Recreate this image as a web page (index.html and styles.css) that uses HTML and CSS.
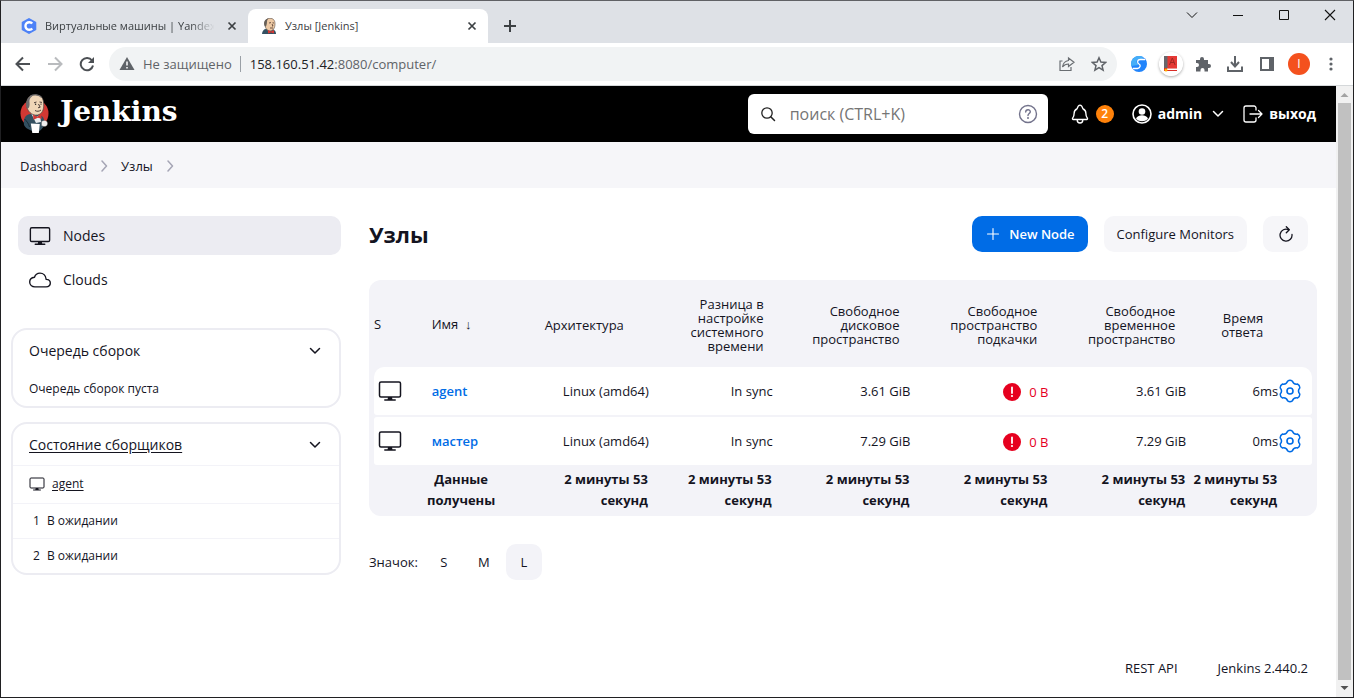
FILE: index.html
```html
<!DOCTYPE html>
<html lang="ru">
<head>
<meta charset="utf-8">
<title>Узлы [Jenkins]</title>
<link rel="stylesheet" href="styles.css">
</head>
<body>
<svg class="defs" aria-hidden="true">
  <symbol id="desktop" viewBox="0 0 24 24"><rect x="1.5" y="3" width="21" height="15" rx="1.5" fill="none" stroke="currentColor" stroke-width="1.5"/><path d="M10 18h4l.5 3h-5z" fill="currentColor"/><path d="M6.8 21h10.4" stroke="currentColor" stroke-width="1.5" stroke-linecap="round"/></symbol>
  <symbol id="cloud" viewBox="0 0 512 512"><path d="M400 240c-8.890-89.540-71-144-144-144-69 0-113.440 48.200-128 96-60 6-112 43.590-112 112 0 66 54 112 120 112h260c55 0 100-27.440 100-88 0-59.820-53-85.760-96-88z" fill="none" stroke="currentColor" stroke-width="32" stroke-linejoin="round"/></symbol>
  <symbol id="chevron" viewBox="0 0 12 12"><path d="M1.500 3.500 6 8l4.500-4.500" fill="none" stroke="currentColor" stroke-width="1.500" stroke-linecap="round" stroke-linejoin="round"/></symbol>
  <symbol id="crumb" viewBox="0 0 12 12"><path d="M4 1l4.500 5L4 11" fill="none" stroke="currentColor" stroke-width="1.500" stroke-linecap="round" stroke-linejoin="round"/></symbol>
  <symbol id="cross" viewBox="0 0 12 12"><path d="M2.500 2.500l7 7M9.500 2.500l-7 7" stroke="currentColor" stroke-width="1.700"/></symbol>
  <symbol id="gear" viewBox="0 0 24 24"><path d="M9.700 2.060A4 4 0 0 1 14.300 2.060Q15.600 5.770 19.460 5.040A4 4 0 0 1 21.750 9.020Q19.200 12 21.750 14.980A4 4 0 0 1 19.460 18.960Q15.600 18.230 14.300 21.940A4 4 0 0 1 9.700 21.940Q8.400 18.230 4.540 18.960A4 4 0 0 1 2.250 14.980Q4.800 12 2.250 9.020A4 4 0 0 1 4.540 5.040Q8.400 5.770 9.700 2.060z" fill="none" stroke="currentColor" stroke-width="1.500" stroke-linejoin="round"/><circle cx="12" cy="12" r="3" fill="none" stroke="currentColor" stroke-width="1.600"/></symbol>
  <symbol id="alert" viewBox="0 0 18 18"><circle cx="9" cy="9" r="9" fill="#e6001f"/><path d="M9 4.500v5.500" stroke="#fff" stroke-width="1.800" stroke-linecap="round"/><circle cx="9" cy="13" r="1.100" fill="#fff"/></symbol>
  <symbol id="butler" viewBox="0 0 30 40">
    <ellipse cx="14.500" cy="19.500" rx="14" ry="14" fill="#d33833"/>
    <path d="M4 31c-1-6 1-10 6-11l9 1c5 1 6 5 5 11-2 3-4 5-6 6-3 0-6-1-8-2-3-1-5-3-6-5z" fill="#335061"/>
    <path d="M11 19l5 4 4-2 1 7-5 1z" fill="#e9edf0"/>
    <path d="M6.500 10C6.500 4 10 .8 15.500.8 21 .8 23.500 4 23.700 10c.3 6-1.700 10-6.200 11C12 22 6.500 17 6.500 10z" fill="#f0d6b7" stroke="#4a4440" stroke-width=".7"/>
    <path d="M6.800 14.500C5 8 7.500 2.500 13 1.200c-1 1.500-3 2.300-3.500 4.800-.4 2 .6 4-.2 6.500-.5 1.800-1.500 2.500-2.500 2z" fill="#6d6b6d"/>
    <path d="M10.500 1.900C14 .2 19 .2 21.500 3.500" fill="none" stroke="#6d6b6d" stroke-width="1.200"/>
    <path d="M14 8.800l2.500-.8M19.500 8l2.500.4M18.500 10l1.700 3.200-2.200.6M15 16.500c2 1.200 4 1 6-.5" fill="none" stroke="#3a2c29" stroke-width=".9"/>
    <circle cx="15.600" cy="10.300" r=".7" fill="#222"/><circle cx="21" cy="10.100" r=".7" fill="#222"/>
    <path d="M13 20.500l4 2.200 4-3 .8 5-4-1-4.300 2z" fill="#d33833"/>
    <path d="M10.800 29.500l9 .5-1 9h-6.500z" fill="#fff"/>
    <path d="M21.500 27.500c3-2 6-1 6 2s-3 4-6 2z" fill="#eee" stroke="#555" stroke-width=".4"/>
    <path d="M4.500 25c2 2 4 4 5 8" fill="none" stroke="#152630" stroke-width=".9"/>
  </symbol>
  <symbol id="butler-head" viewBox="0 0 16 16"><path d="M1 16c0-3 2-5 4-5h5c3 0 5 2 5 5z" fill="#335061"/><path d="M4 6c0-4 2-5.700 5-5.700s5 1.700 5 5.700-2 7-5 7-5-3-5-7z" fill="#edc9a4" stroke="#5a514b" stroke-width=".6"/><path d="M3.700 8C2 4 4 .8 7.500.4 6.500 1.500 6 2 6 3.500c0 1.500-.2 3-.8 4.500-.5.800-1 .8-1.500 0z" fill="#665f58"/><path d="M8 5l2-.4M11.500 4.800l1.500.2M11 6l1 2h-1M9 10h3" fill="none" stroke="#4b352b" stroke-width=".8"/><path d="M7 12l3 1.500 3-1.500v3.500l-3-1-3 1z" fill="#d33833"/></symbol>
</svg>

<header class="browser">
  <div class="tabs">
    <div class="tab">
      <svg class="i16" viewBox="0 0 16 16"><path d="M8 1l6.300 3.500v7L8 15l-6.300-3.500v-7z" fill="#4d82f7" stroke="#4d82f7" stroke-width="2" stroke-linejoin="round"/><path d="M11.200 5.600A3.800 3.800 0 1 0 11.200 10.400" fill="none" stroke="#fff" stroke-width="2.400"/><path d="M11.300 4.500H14v7h-2.700z" fill="none"/></svg>
      <span class="tab-title fade">Виртуальные машины | Yandex</span>
      <button class="bare" aria-label="Закрыть вкладку"><svg class="i12"><use href="#cross"/></svg></button>
    </div>
    <div class="tab active">
      <svg class="i16"><use href="#butler-head"/></svg>
      <span class="tab-title">Узлы [Jenkins]</span>
      <button class="bare" aria-label="Закрыть вкладку"><svg class="i12"><use href="#cross"/></svg></button>
    </div>
    <button class="bare new-tab" aria-label="Новая вкладка"><svg class="i16" viewBox="0 0 16 16"><path d="M8 2v12M2 8h12" stroke="#3c4043" stroke-width="2"/></svg></button>
    <div class="window-controls">
      <button class="bare" aria-label="Поиск вкладок"><svg class="i12" viewBox="0 0 12 12"><path d="M1 3.500l5 5 5-5" fill="none" stroke="#111"/></svg></button>
      <button class="bare" aria-label="Свернуть"><svg class="i12" viewBox="0 0 12 12"><path d="M1 6.500h10" stroke="#111"/></svg></button>
      <button class="bare" aria-label="Развернуть"><svg class="i12" viewBox="0 0 12 12"><path d="M1.500 1.500h9v9h-9z" fill="none" stroke="#111"/></svg></button>
      <button class="bare" aria-label="Закрыть"><svg class="i12" viewBox="0 0 12 12"><path d="M1 1l10 10M11 1L1 11" stroke="#111" stroke-width="1.100"/></svg></button>
    </div>
  </div>
  <div class="toolbar">
    <button class="bare tool" aria-label="Назад"><svg class="i16" viewBox="0 0 16 16"><path d="M15 8H2M8 1.500L1.500 8 8 14.500" fill="none" stroke="#4c5054" stroke-width="2"/></svg></button>
    <button class="bare tool" aria-label="Вперёд"><svg class="i16" viewBox="0 0 16 16"><path d="M1 8h13M8 1.500L14.500 8 8 14.500" fill="none" stroke="#b9bbbe" stroke-width="2"/></svg></button>
    <button class="bare tool" aria-label="Обновить"><svg class="i16" viewBox="0 0 16 16"><path d="M13 4.500A6.200 6.200 0 1 0 14 9.500" fill="none" stroke="#4c5054" stroke-width="2"/><path d="M15 1v6H9z" fill="#4c5054"/></svg></button>
    <div class="omnibox">
      <svg class="i16" viewBox="0 0 16 16"><path d="M8 1l7.500 13H.5z" fill="#5f6368"/><path d="M8 5.500v4M8 11v1.500" stroke="#fff" stroke-width="1.500"/></svg>
      <span class="insecure">Не защищено</span>
      <span class="url"><b>158.160.51.42</b>:8080/computer/</span>
      <button class="bare tool" aria-label="Поделиться"><svg class="i16" viewBox="0 0 16 16"><path d="M3.500 5H1v9.500h11V11M9.500 2l5.500 4.300-5.500 4.200V8C7 8 5 9 3.500 11c.5-3.500 2.500-6 6-6.500z" fill="none" stroke="#6a6e72" stroke-width="1.200"/></svg></button>
      <button class="bare tool" aria-label="В закладки"><svg class="i16" viewBox="0 0 16 16"><path d="M8 1.800l1.900 4.300 4.700.4-3.600 3.100 1.100 4.600L8 11.700l-4.100 2.500L5 9.600 1.400 6.500l4.700-.4z" fill="none" stroke="#5f6368" stroke-width="1.500"/></svg></button>
    </div>
    <button class="bare tool" aria-label="Расширение"><svg class="i16" viewBox="0 0 16 16"><circle cx="8" cy="8" r="8" fill="#2184fb"/><path d="M0 8A8 8 0 0 1 12 1.100L11.500 3H9C5 3 4.500 6.500 7 8.200L7.500 9 0 10z" fill="#45aef8"/><path d="M14 3.500H9.500C6 3.500 6 7 8 8s1.500 4-1.500 4.500H2" fill="none" stroke="#fff" stroke-width="1.300"/></svg></button>
    <button class="bare tool" aria-label="Словарь"><svg class="i24 disc" viewBox="0 0 24 24"><circle cx="12" cy="12" r="12" fill="#fff"/><path d="M5 4h4v14H5z" fill="#68666b"/><path d="M8.500 4H18v12H8.500z" fill="#e53935"/><path d="M5 16h13v3H5z" fill="#d92c27"/><path d="M8 16.500h10v1.500H8z" fill="#fff"/><path d="M10.500 13l2.800-7 2.800 7M11.500 10.500h3.700" fill="none" stroke="#a02822"/><circle cx="7" cy="18" r="1.500" fill="#ffb000"/></svg></button>
    <button class="bare tool" aria-label="Расширения"><svg class="i16" viewBox="0 0 16 16"><path d="M1 4h4V3a2 2 0 0 1 4 0v1h4v4h1a2 2 0 0 1 0 4h-1v3.500H9.500V14a2 2 0 0 0-4 0v1.500H1V11h1a2 2 0 0 0 0-4H1z" fill="#5f6368"/></svg></button>
    <button class="bare tool" aria-label="Загрузки"><svg class="i16" viewBox="0 0 16 16"><path d="M8 0v10M4 6l4 4.500L12 6M1 10.500V15h14v-4.500" fill="none" stroke="#5f6368" stroke-width="2"/></svg></button>
    <button class="bare tool" aria-label="Боковая панель"><svg class="i16" viewBox="0 0 16 16"><path d="M2 2h12v12H2z" fill="none" stroke="#5f6368" stroke-width="2"/><path d="M10 2h4v12h-4z" fill="#5f6368"/></svg></button>
    <button class="bare tool" aria-label="Профиль"><span class="avatar">I</span></button>
    <button class="bare tool" aria-label="Меню"><svg class="i16" viewBox="0 0 16 16"><g fill="#5f6368"><circle cx="8" cy="3" r="1.600"/><circle cx="8" cy="8" r="1.600"/><circle cx="8" cy="13" r="1.600"/></g></svg></button>
  </div>
</header>

<div class="viewport">
  <div class="page">
    <header class="top">
      <a class="brand" href="#"><svg class="logo"><use href="#butler"/></svg><span>Jenkins</span></a>
      <label class="search">
        <svg class="i16" viewBox="0 0 16 16"><circle cx="7" cy="7" r="5.200" fill="none" stroke="#222" stroke-width="1.300"/><path d="M11 11l3.500 3.500" stroke="#222" stroke-width="1.500" stroke-linecap="round"/></svg>
        <input type="search" aria-label="Поиск" placeholder="поиск (CTRL+K)">
        <svg class="i20" viewBox="0 0 20 20"><circle cx="10" cy="10" r="8.500" fill="none" stroke="#73738c" stroke-width="1.400"/><path d="M7.700 8c0-3 4.600-3 4.600-.3 0 1.800-2.300 1.800-2.300 3.800" fill="none" stroke="#73738c" stroke-width="1.400" stroke-linecap="round"/><circle cx="10" cy="14" r="1" fill="#73738c"/></svg>
      </label>
      <button class="bare bell" aria-label="Уведомления"><svg class="i22" viewBox="0 0 512 512"><path d="M427.700 351.400C407 326 392.500 312.700 392.500 240.600c0-66-34-89.500-62-101-3.700-1.500-7.200-5-8.300-8.800C317.300 114.200 303.500 48 256 48s-61.300 66.200-66.200 82.800c-1.100 3.800-4.600 7.300-8.300 8.800-28 11.500-62 35-62 101 0 72.100-14.500 85.400-35.200 110.800C75.800 362 83.400 384 98.400 384h315.400c14.900 0 22.400-22 13.900-32.600zM320 384v16a64 64 0 0 1-128 0v-16" fill="none" stroke="currentColor" stroke-width="32" stroke-linejoin="round"/></svg><span class="badge">2</span></button>
      <a class="user" href="#"><svg class="i20" viewBox="0 0 20 20"><circle cx="10" cy="10" r="9" fill="none" stroke="currentColor" stroke-width="1.600"/><circle cx="10" cy="7.500" r="3.300" fill="currentColor"/><path d="M4 15c1-5 11-5 12 0a9 9 0 0 1-12 0z" fill="currentColor"/></svg>admin</a>
      <button class="bare user-menu" aria-label="Меню пользователя"><svg class="i12"><use href="#chevron"/></svg></button>
      <a class="user" href="#"><svg class="i20" viewBox="0 0 20 20"><path d="M13 6V4a2 2 0 0 0-2-2H3a2 2 0 0 0-2 2v12a2 2 0 0 0 2 2h8a2 2 0 0 0 2-2v-2M15.500 6.500L19 10l-3.500 3.500M7 10h12" fill="none" stroke="currentColor" stroke-width="1.300" stroke-linecap="round" stroke-linejoin="round"/></svg>выход</a>
    </header>
    <nav class="crumbs">
      <a href="#">Dashboard</a><svg class="i12"><use href="#crumb"/></svg>
      <a href="#">Узлы</a><svg class="i12"><use href="#crumb"/></svg>
    </nav>
    <div class="body">
      <aside class="side">
        <nav class="tasks">
          <a class="task current" href="#"><svg class="i22"><use href="#desktop"/></svg>Nodes</a>
          <a class="task" href="#"><svg class="i22"><use href="#cloud"/></svg>Clouds</a>
        </nav>
        <section class="pane">
          <div class="pane-head"><span>Очередь сборок</span><button class="bare" aria-label="Свернуть"><svg class="i12"><use href="#chevron"/></svg></button></div>
          <p class="pane-empty">Очередь сборок пуста</p>
        </section>
        <section class="pane">
          <div class="pane-head"><a href="#">Состояние сборщиков</a><button class="bare" aria-label="Свернуть"><svg class="i12"><use href="#chevron"/></svg></button></div>
          <div class="pane-node"><svg class="i16"><use href="#desktop"/></svg><a href="#">agent</a></div>
          <div class="executor"><span>1</span><span>В ожидании</span></div>
          <div class="executor"><span>2</span><span>В ожидании</span></div>
        </section>
      </aside>
      <main class="main">
        <div class="app-bar">
          <h1>Узлы</h1>
          <a class="btn primary" href="#"><svg class="i16" viewBox="0 0 16 16"><path d="M8 2.500v11M2.500 8h11" stroke="currentColor" stroke-width="1.100" stroke-linecap="round"/></svg>New Node</a>
          <a class="btn" href="#">Configure Monitors</a>
          <button class="btn refresh" aria-label="Обновить"><svg class="i16" viewBox="0 0 16 16"><path d="M10.500 3.700A6 6 0 1 0 14 8.500" fill="none" stroke="currentColor" stroke-width="1.300" stroke-linecap="round"/><path d="M8.300.8l3 3-3 3" fill="none" stroke="currentColor" stroke-width="1.300" stroke-linecap="round" stroke-linejoin="round"/></svg></button>
        </div>
        <div class="table-wrap">
          <table>
            <colgroup><col class="c-s"><col class="c-name"><col class="c-arch"><col class="c-diff"><col class="c-space"><col class="c-space"><col class="c-space"><col class="c-time"><col class="c-gear"></colgroup>
            <thead><tr><th class="left">S</th><th class="left name">Имя &nbsp;↓</th><th class="arch">Архитектура</th><th class="diff">Разница в<br>настройке<br>системного<br>времени</th><th>Свободное<br>дисковое<br>пространство</th><th>Свободное<br>пространство<br>подкачки</th><th>Свободное<br>временное<br>пространство</th><th class="time">Время<br>ответа</th><th></th></tr></thead>
            <tbody>
              <tr><td class="state"><svg class="i24"><use href="#desktop"/></svg></td><td class="left name"><a href="#">agent</a></td><td>Linux (amd64)</td><td>In sync</td><td>3.61 GiB</td><td><span class="error"><svg class="i18"><use href="#alert"/></svg>0 B</span></td><td>3.61 GiB</td><td>6ms</td><td class="gear"><a href="#" aria-label="Настроить"><svg class="i24"><use href="#gear"/></svg></a></td></tr>
              <tr><td class="state"><svg class="i24"><use href="#desktop"/></svg></td><td class="left name"><a href="#">мастер</a></td><td>Linux (amd64)</td><td>In sync</td><td>7.29 GiB</td><td><span class="error"><svg class="i18"><use href="#alert"/></svg>0 B</span></td><td>7.29 GiB</td><td>0ms</td><td class="gear"><a href="#" aria-label="Настроить"><svg class="i24"><use href="#gear"/></svg></a></td></tr>
            </tbody>
            <tfoot><tr><th></th><th class="center">Данные<br>получены</th><th>2 минуты 53<br>секунд</th><th>2 минуты 53<br>секунд</th><th>2 минуты 53<br>секунд</th><th>2 минуты 53<br>секунд</th><th>2 минуты 53<br>секунд</th><th>2 минуты 53<br>секунд</th><th></th></tr></tfoot>
          </table>
        </div>
        <div class="sizes"><span>Значок:</span><button class="size">S</button><button class="size">M</button><button class="size on">L</button></div>
      </main>
    </div>
    <footer class="foot"><a href="#">REST API</a><a href="#">Jenkins 2.440.2</a></footer>
  </div>
  <div class="scrollbar" aria-hidden="true"><svg viewBox="0 0 17 17"><path d="M4.500 11h8l-4-4z" fill="#a3a3a3"/></svg><div class="thumb"></div><svg viewBox="0 0 17 17"><path d="M4.500 6h8l-4 4z" fill="#505050"/></svg></div>
</div>
</body>
</html>
```

FILE: styles.css
```css
* { box-sizing: border-box; }
body {
  margin: 0;
  height: 100vh;
  display: flex;
  flex-direction: column;
  border: 1px solid #202022;
  border-top-color: #606165;
  background: #fff;
  color: #14141f;
  font: 14px/20px "Open Sans", "Noto Sans", sans-serif;
  overflow: hidden;
}
a { color: inherit; text-decoration: none; }
svg { flex: none; display: block; }
.defs { position: absolute; width: 0; height: 0; }
.i12 { width: 12px; height: 12px; }
.i16 { width: 16px; height: 16px; }
.i18 { width: 18px; height: 18px; }
.i20 { width: 20px; height: 20px; }
.i22 { width: 22px; height: 22px; }
.i24 { width: 24px; height: 24px; }
.bare { border: 0; padding: 0; background: none; color: inherit; font: inherit; display: flex; align-items: center; justify-content: center; }

/* Browser chrome */
.tabs { display: flex; height: 42px; padding: 8px 0 0 7px; background: #dee1e6; color: #3c4043; }
.tab { display: flex; align-items: center; gap: 8px; width: 240px; padding: 0 10px 0 13px; font-size: 11px; }
.tab.active { background: #fff; border-radius: 8px 8px 0 0; }
.tab-title { flex: 1; white-space: nowrap; }
.fade { mask-image: linear-gradient(to right, #000 84%, transparent 98%); }
.new-tab { width: 28px; margin-left: 8px; }
.window-controls { display: flex; margin: -8px 0 0 auto; height: 28px; }
.window-controls button { width: 46px; }
.toolbar { display: flex; align-items: center; height: 43px; padding: 0 6px; border-bottom: 1px solid #d5d8da; }
.tool { width: 32px; height: 32px; flex: none; }
.disc { border-radius: 50%; box-shadow: 0 1px 3px #0005; }
.omnibox { flex: 1; display: flex; align-items: center; height: 34px; margin: 0 6px; padding: 0 2px 0 10px; border-radius: 17px; background: #f1f3f4; color: #5f6368; font-size: 13px; white-space: nowrap; }
.insecure { margin-left: 8px; padding-right: 8px; border-right: 1px solid #9aa0a6; line-height: 16px; }
.url { flex: 1; margin-left: 9px; }
.url b { font-weight: 400; color: #202124; }
.avatar { width: 22px; height: 22px; border-radius: 50%; background: #f4511e; color: #fff; font-size: 12px; line-height: 22px; text-align: center; }

.viewport { flex: 1; display: flex; min-height: 0; }
.page { flex: 1; display: flex; flex-direction: column; min-width: 0; }
.scrollbar { width: 17px; display: flex; flex-direction: column; background: #f1f1f1; }
.scrollbar .thumb { flex: 1; margin: 0 2px; background: #c1c1c1; }

/* Jenkins header */
.top { display: flex; align-items: center; height: 56px; padding: 0 20px 0 19px; background: #000; color: #fff; }
.brand { display: flex; align-items: center; gap: 10px; margin-right: auto; font: bold 28px/36px "DejaVu Serif", serif; }
.brand span { padding-bottom: 4px; }
.logo { width: 30px; height: 40px; }
.search { display: flex; align-items: center; width: 300px; height: 40px; padding: 0 10px 0 12px; border-radius: 6px; background: #fff; }
.search input { flex: 1; min-width: 0; margin-left: 14px; padding: 0; border: 0; outline: 0; background: none; font: 16px/20px "Open Sans", sans-serif; }
.search input::placeholder { color: #757575; opacity: 1; }
.bell { gap: 5px; margin: 0 18px 0 21px; }
.badge { width: 18px; height: 18px; border-radius: 50%; background: #ff820a; color: #fff; font-size: 12px; font-weight: 600; line-height: 18px; }
.user { display: flex; align-items: center; gap: 6px; font-weight: 700; }
.user-menu { margin: 0 19px 0 10px; }

.crumbs { display: flex; align-items: center; height: 46px; padding: 2px 19px 0; gap: 11px; background: #f6f6f9; font-size: 13px; font-weight: 500; }
.crumbs svg { color: #a5a5b5; }

.body { display: flex; gap: 28px; padding: 28px 19px 0 10px; }
.side { width: 330px; flex: none; }
.tasks { display: flex; flex-direction: column; gap: 5px; margin: 0 0 29px 7px; }
.task { display: flex; align-items: center; gap: 12px; height: 39px; padding-left: 11px; border-radius: 10px; font-weight: 500; }
.task.current { background: #ececf2; }
.pane { margin-bottom: 14px; border: 2px solid #ececf2; border-radius: 16px; font-size: 12px; }
.pane-head { display: flex; align-items: center; justify-content: space-between; height: 41px; padding: 0 18px 0 16px; font-size: 14px; font-weight: 500; }
.pane-empty { margin: 0; padding: 8px 16px 7px; }
.pane a { text-decoration: underline; text-underline-offset: 2px; }
.pane-node { display: flex; align-items: center; gap: 7px; height: 38px; padding: 0 16px 2px; border-top: 1px solid #f3f3f8; font-weight: 500; }
.executor { display: flex; align-items: center; gap: 7px; height: 35px; padding-left: 20px; border-top: 1px solid #f3f3f8; }

.main { flex: 1; min-width: 0; }
.app-bar { display: flex; align-items: center; gap: 16px; padding-right: 9px; margin-bottom: 28px; }
h1 { margin: 0 auto 0 0; font-size: 22px; line-height: 30px; font-weight: 700; }
.btn { display: flex; align-items: center; gap: 8px; height: 36px; padding: 0 13px; border: 0; border-radius: 10px; background: #f6f6f9; color: #14141f; font-size: 13px; font-weight: 500; }
.btn.primary { background: #006ce6; color: #fff; font-weight: 600; }
.btn.refresh { width: 45px; justify-content: center; padding: 0; }

.table-wrap { padding: 0 5px; border-radius: 12px; background: #f3f3f8; }
table { width: 100%; table-layout: fixed; border-spacing: 0 2px; font-size: 13px; }
th, td { padding: 0; text-align: right; white-space: nowrap; }
.c-s { width: 5.3%; }
.c-name { width: 8.1%; }
.c-arch { width: 15.9%; }
.c-diff { width: 13.2%; }
.c-space { width: 14.7%; }
.c-time { width: 9.8%; }
thead th { height: 83px; padding-right: 11px; padding-top: 3px; font-weight: 500; line-height: 14px; }
thead .arch { padding-right: 25px; }
thead .diff { padding-right: 9px; }
thead .time { padding-right: 15px; }
th.left, td.left { text-align: left; }
thead .left { padding-right: 0; padding-top: 0; }
th.name, td.name { padding-left: 8px; }
tbody td { height: 48px; background: #fff; }
tbody td:first-child { border-radius: 3px 0 0 3px; }
tbody td:last-child { border-radius: 0 3px 3px 0; }
tbody tr:first-child td:first-child { border-top-left-radius: 10px; }
tbody tr:first-child td:last-child { border-top-right-radius: 10px; }
.name a { color: #006ce6; font-weight: 600; }
td.state { padding-left: 4px; }
.gear a { display: block; color: #006ce6; }
.error { display: inline-flex; align-items: center; gap: 8px; color: #e6001f; vertical-align: middle; }
tfoot th { height: 47px; padding: 2px 1px 0 0; line-height: 21px; font-weight: 700; vertical-align: top; }
tfoot th.center { text-align: center; }

.sizes { display: flex; align-items: center; gap: 4px; margin-top: 28px; font-size: 13px; }
.sizes span { margin-right: 4px; }
.size { width: 36px; height: 36px; border: 0; border-radius: 10px; background: none; color: inherit; font: 500 13px/20px "Open Sans", sans-serif; }
.size.on { background: #f3f3f8; }
.foot { display: flex; justify-content: flex-end; gap: 40px; margin-top: auto; padding: 0 28px 19px; font-size: 13px; line-height: 20px; }
```
